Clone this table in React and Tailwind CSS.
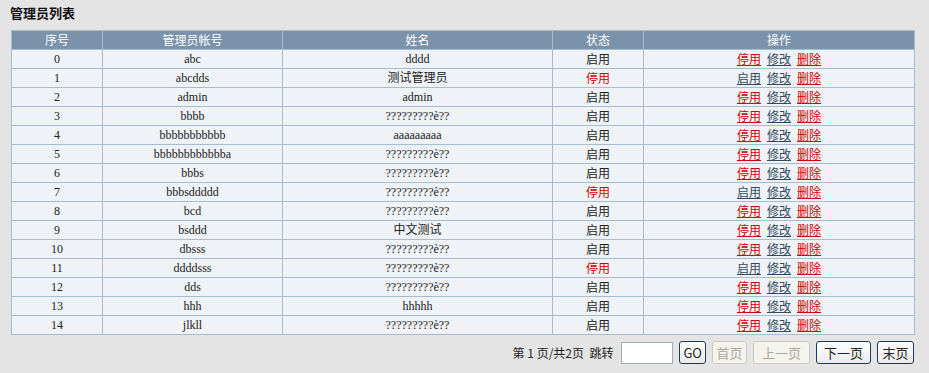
const rows = [
  ['0', 'abc', 'dddd', true],
  ['1', 'abcdds', '测试管理员', false],
  ['2', 'admin', 'admin', true],
  ['3', 'bbbb', '?????????è??', true],
  ['4', 'bbbbbbbbbbb', 'aaaaaaaaa', true],
  ['5', 'bbbbbbbbbbbba', '?????????è??', true],
  ['6', 'bbbs', '?????????è??', true],
  ['7', 'bbbsddddd', '?????????è??', false],
  ['8', 'bcd', '?????????è??', true],
  ['9', 'bsddd', '中文测试', true],
  ['10', 'dbsss', '?????????è??', true],
  ['11', 'ddddsss', '?????????è??', false],
  ['12', 'dds', '?????????è??', true],
  ['13', 'hhh', 'hhhhh', true],
  ['14', 'jlkll', '?????????è??', true],
];

const serif = "font-['Liberation_Serif','Noto_Sans_CJK_SC',serif]";

const App = () => {
  return (
    <div className="min-h-[373px] bg-[#e4e4e4] text-[12px] text-[#222] font-['Noto_Sans_CJK_SC',sans-serif]">
      <div className="pl-[10px] pt-[3px] h-[30px] text-[13px] font-bold text-[#111]">管理员列表</div>

      <table className="ml-[11px] w-[903px] table-fixed border-collapse">
        <colgroup>
          <col className="w-[91px]" />
          <col className="w-[180px]" />
          <col className="w-[270px]" />
          <col className="w-[91px]" />
          <col className="w-[271px]" />
        </colgroup>
        <thead>
          <tr className="h-[19px] bg-[#7a92aa] text-white leading-[16px]">
            <th className="border border-[#a8bccf] font-normal p-0">序号</th>
            <th className="border border-[#a8bccf] font-normal p-0">管理员帐号</th>
            <th className="border border-[#a8bccf] font-normal p-0">姓名</th>
            <th className="border border-[#a8bccf] font-normal p-0">状态</th>
            <th className="border border-[#a8bccf] font-normal p-0">操作</th>
          </tr>
        </thead>
        <tbody>
          {rows.map(([id, account, name, enabled]) => (
            <tr key={id} className="h-[19px] bg-[#eff2f6] text-center leading-[16px]">
              <td className={`border border-[#a8bccf] p-0 ${serif}`}>{id}</td>
              <td className={`border border-[#a8bccf] p-0 ${serif}`}>{account}</td>
              <td className={`border border-[#a8bccf] p-0 ${serif}`}>{name}</td>
              <td className={`border border-[#a8bccf] p-0 ${enabled ? 'text-[#222]' : 'text-[#d40000]'}`}>
                {enabled ? '启用' : '停用'}
              </td>
              <td className="border border-[#a8bccf] p-0">
                <div className="flex justify-center gap-[6px]">
                  {enabled ? (
                    <a href="#" className="text-[#d40000] underline">停用</a>
                  ) : (
                    <a href="#" className="text-[#33495f] underline">启用</a>
                  )}
                  <a href="#" className="text-[#33495f] underline">修改</a>
                  <a href="#" className="text-[#d40000] underline">删除</a>
                </div>
              </td>
            </tr>
          ))}
        </tbody>
      </table>

      <div className="flex items-center justify-end w-[914px] mt-[6px] gap-[6px] text-[#222]">
        <span className="mr-[2px]">第 1 页/共2页&nbsp; 跳转</span>
        <input className="w-[52px] h-[22px] bg-white border border-[#a5acb5] outline-none px-1" />
        <button className="h-[23px] px-[3px] border border-[#1f3a52] rounded-[3px] bg-gradient-to-b from-white to-[#e8ebee] text-[13px] leading-none">GO</button>
        <button disabled className="h-[23px] w-[35px] border border-[#cbc9bd] rounded-[3px] bg-[#f4f3ee] text-[#ada99a] text-[13px] leading-none">首页</button>
        <button disabled className="h-[23px] w-[57px] border border-[#cbc9bd] rounded-[3px] bg-[#f4f3ee] text-[#ada99a] text-[13px] leading-none">上一页</button>
        <button className="h-[23px] w-[55px] border border-[#1f3a52] rounded-[3px] bg-gradient-to-b from-white to-[#e8ebee] text-[13px] leading-none">下一页</button>
        <button className="h-[23px] w-[37px] border border-[#1f3a52] rounded-[3px] bg-gradient-to-b from-white to-[#e8ebee] text-[13px] leading-none">末页</button>
      </div>
    </div>
  );
};

export default App;
